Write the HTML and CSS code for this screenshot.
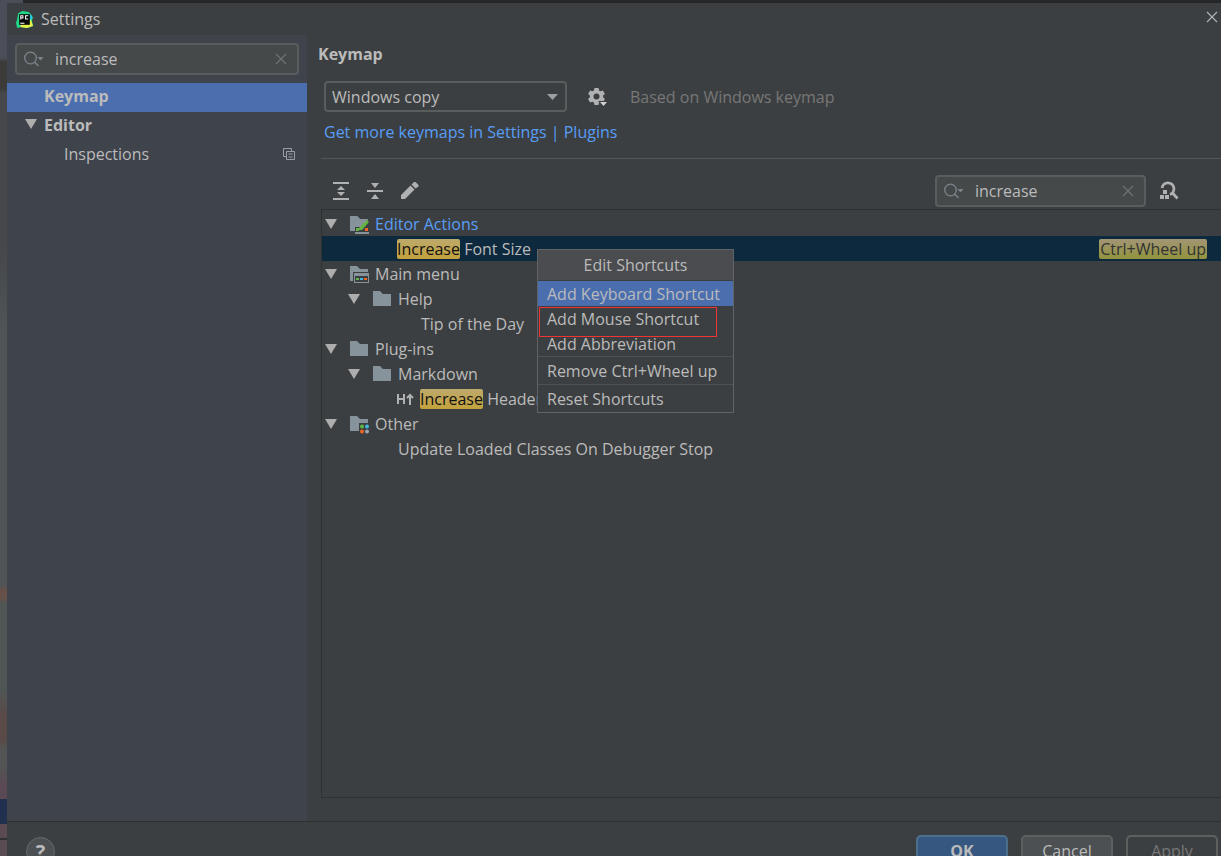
FILE: index.html
```html
<!DOCTYPE html>
<html lang="en">
<head>
<meta charset="utf-8">
<title>Settings</title>
<link rel="stylesheet" href="styles.css">
</head>
<body>
<svg class="symbols" aria-hidden="true">
  <symbol id="search" viewBox="0 0 22 16"><circle cx="6.500" cy="7" r="5.800" fill="none" stroke="currentColor" stroke-width="1.300"/><path d="M10.500 11l4 4" stroke="currentColor" stroke-width="1.500"/><path d="M13.500 6h6l-3 3.500z" fill="currentColor"/></symbol>
  <symbol id="cross" viewBox="0 0 12 12"><path d="M1 1l10 10M11 1L1 11" stroke="currentColor" stroke-width="1.200"/></symbol>
  <symbol id="arrow" viewBox="0 0 12 10"><path d="M0 0h12L6 10z" fill="currentColor"/></symbol>
  <symbol id="folder" viewBox="0 0 20 20"><path d="M0 2h7l3 3h8v12H0z" fill="#87939a"/></symbol>
</svg>
<div class="desktop">
<div class="window">
  <header class="titlebar">
    <svg class="logo" viewBox="0 0 16 16"><path d="M2 2l4-2 6 1 2 2 2 3-1 3 1 5-5 2-6-1-4 1-1-5 1-3z" fill="#21d789"/><path d="M12 2l3 3v3h-2z" fill="#22c7e8"/><path d="M14 8l2 6-6 2-6-1 1-3z" fill="#eaf24a"/><path d="M3 3h10v10H3z" fill="#050505"/><path d="M4.500 8V4.500h2v2h-2M11.500 4.500H9v3h2.500" fill="none" stroke="#fff"/><path d="M4 11.500h4" stroke="#fff"/></svg>
    <h1>Settings</h1>
    <button class="plain close" aria-label="Close"><svg width="12" height="12"><use href="#cross"/></svg></button>
  </header>
  <div class="body">
    <aside class="sidebar">
      <label class="search"><svg width="22" height="16"><use href="#search"/></svg><input type="text" value="increase" aria-label="Search settings"><button class="plain" aria-label="Clear search"><svg width="12" height="12"><use href="#cross"/></svg></button></label>
      <nav>
        <a class="nav-item current" href="#keymap">Keymap</a>
        <a class="nav-item parent" href="#editor"><svg class="arrow" width="12" height="10"><use href="#arrow"/></svg>Editor</a>
        <a class="nav-item child" href="#inspections">Inspections<svg class="copy" width="12" height="12" viewBox="0 0 12 12" fill="none" stroke="#98a0a6"><path d="M3 8.500H.5V.5h8V3M3.500 3.500h8v8h-8zM5.500 6h4M5.500 9h4"/></svg></a>
      </nav>
    </aside>
    <main class="content" id="keymap">
      <h2>Keymap</h2>
      <div class="scheme">
        <span class="select"><select aria-label="Keymap scheme"><option>Windows copy</option></select><svg width="11" height="6" viewBox="0 0 11 6"><path d="M0 0h11L5.500 6z" fill="#9da0a2"/></svg></span>
        <button class="plain" aria-label="Scheme actions"><svg width="20" height="20" viewBox="0 0 20 20"><path fill="#afb1b3" fill-rule="evenodd" d="M6.500 1h4l.6 2.400 1.400.8 2.400-.7 2 3.400-1.800 1.700v1.700l1.800 1.700-2 3.400-2.400-.7-1.400.8-.6 2.500h-4l-.6-2.500-1.400-.8-2.400.7-2-3.400 1.800-1.700V8.600L.1 6.900l2-3.400 2.400.7 1.400-.8zM8.500 6.400a3 3 0 1 0 0 6 3 3 0 0 0 0-6z"/><path d="M10 14h10l-5 5z" fill="#3c3f41"/><path d="M12 15h7l-3.500 4z" fill="#d0d2d3"/></svg></button>
        <span class="hint">Based on Windows keymap</span>
      </div>
      <p class="plugins"><a href="#plugins">Get more keymaps in Settings | Plugins</a></p>
      <hr>
      <div class="toolbar">
        <button class="plain" aria-label="Expand all"><svg width="16" height="18" viewBox="0 0 16 18" fill="#afb1b3"><path d="M0 0h16v2H0zM0 16h16v2H0zM8 4l4 4H4zM8 14l4-4H4z"/></svg></button>
        <button class="plain" aria-label="Collapse all"><svg width="16" height="18" viewBox="0 0 16 18" fill="#afb1b3"><path d="M0 8h16v2H0zM4 1h8L8 6zM4 17h8l-4-5z"/></svg></button>
        <button class="plain" aria-label="Edit shortcut"><svg width="18" height="18" viewBox="0 0 18 18" fill="#afb1b3"><path d="M0 17v-4l9.500-9.500 4 4L4 17zM10.500 2.500L13 0h1.500l3 3v1.500L14.500 6.500z"/></svg></button>
        <label class="search"><svg width="22" height="16"><use href="#search"/></svg><input type="text" value="increase" aria-label="Search actions"><button class="plain" aria-label="Clear action search"><svg width="12" height="12"><use href="#cross"/></svg></button></label>
        <button class="plain find" aria-label="Find by shortcut"><svg width="20" height="19" viewBox="0 0 20 19"><path d="M3 7a6 6 0 1 1 8 6.500M13.500 12l5 5.500" fill="none" stroke="#afb1b3" stroke-width="2.800"/><path d="M4 9h4v4H4zM1 14h4v4H1zM6 14h4v4H6z" fill="#afb1b3"/></svg></button>
      </div>
      <div class="tree">
        <ul>
          <li class="row l1 link"><svg class="arrow" width="12" height="10"><use href="#arrow"/></svg><svg class="icon" viewBox="0 0 20 20"><use href="#folder"/><path d="M4 18v-5h4l8-8h4v14H4z" fill="#3c3f41"/><path d="M0 2h7l3 3h8v1l-7 7H5v4H0z" fill="#87939a"/><path d="M9 14l8-8 2 2-7 8H9z" fill="#62b543"/><path d="M5 18h14v2H5z" fill="#87939a"/><path d="M6 14h3v3H6z" fill="#62b543"/><path d="M15 14h3v3h-3z" fill="#f26522"/></svg>Editor Actions</li>
          <li class="row l3 selected"><span><mark>Increase</mark> Font Size</span><kbd>Ctrl+Wheel up</kbd></li>
          <li class="row l1"><svg class="arrow" width="12" height="10"><use href="#arrow"/></svg><svg class="icon" viewBox="0 0 20 20"><use href="#folder"/><path d="M3 8h17v12H3z" fill="#3c3f41"/><path d="M4 9h15v10H4z" fill="#87939a"/><path d="M5 12h13v6H5z" fill="#3c3f41"/><path d="M6 14h3v2H6z" fill="#62b543"/><path d="M10 14h3v2h-3z" fill="#40b6e0"/><path d="M14 14h3v2h-3z" fill="#f26522"/></svg>Main menu</li>
          <li class="row l2"><svg class="arrow" width="12" height="10"><use href="#arrow"/></svg><svg class="icon" viewBox="0 0 20 20"><use href="#folder"/></svg>Help</li>
          <li class="row l4">Tip of the Day</li>
          <li class="row l1"><svg class="arrow" width="12" height="10"><use href="#arrow"/></svg><svg class="icon" viewBox="0 0 20 20"><use href="#folder"/></svg>Plug-ins</li>
          <li class="row l2"><svg class="arrow" width="12" height="10"><use href="#arrow"/></svg><svg class="icon" viewBox="0 0 20 20"><use href="#folder"/></svg>Markdown</li>
          <li class="row l3"><svg class="heading" width="18" height="12" viewBox="0 0 18 12" fill="none" stroke="#afb1b3" stroke-width="2"><path d="M1 1v10M7 1v10M1 6h6M13 2v10M10 5l3-3 3 3"/></svg><span><mark>Increase</mark> Header</span></li>
          <li class="row l1"><svg class="arrow" width="12" height="10"><use href="#arrow"/></svg><svg class="icon" viewBox="0 0 20 20"><use href="#folder"/><path d="M9 9h11v11H9z" fill="#3c3f41"/><circle cx="12" cy="12.500" r="2" fill="#62b543"/><circle cx="17" cy="12.500" r="2" fill="#40b6e0"/><circle cx="12" cy="17.500" r="2" fill="#f26522"/><circle cx="17" cy="17.500" r="2" fill="#9aa7b0"/></svg>Other</li>
          <li class="row l3">Update Loaded Classes On Debugger Stop</li>
        </ul>
        <div class="menu" role="menu" aria-label="Edit Shortcuts">
          <div class="menu-title">Edit Shortcuts</div>
          <button class="active" role="menuitem">Add Keyboard Shortcut</button>
          <button class="marked" role="menuitem">Add Mouse Shortcut</button>
          <button role="menuitem">Add Abbreviation</button>
          <button class="divided" role="menuitem">Remove Ctrl+Wheel up</button>
          <button class="divided" role="menuitem">Reset Shortcuts</button>
        </div>
      </div>
    </main>
  </div>
  <footer class="footer">
    <button class="help" aria-label="Help">?</button>
    <button class="btn primary">OK</button>
    <button class="btn">Cancel</button>
    <button class="btn" disabled>Apply</button>
  </footer>
</div>
</div>
</body>
</html>
```
FILE: styles.css
```css
*, *::after { box-sizing: border-box; }
body { margin: 0; overflow: hidden; font: 16px/24px "Open Sans", "Noto Sans", sans-serif; color: #bbbbbb; background: #3c3f41; }
button, input, select { font: inherit; color: inherit; }
a { color: inherit; text-decoration: none; }
h1, h2, p, ul { margin: 0; padding: 0; list-style: none; font-size: inherit; }
svg { display: block; flex: none; }
.symbols { position: absolute; width: 0; height: 0; }
.plain { display: flex; padding: 0; border: 0; background: none; }

.desktop {
  height: 100vh;
  padding: 3px 0 0 7px;
  background:
    linear-gradient(90deg, transparent 23px, #252627 23px) top / 100% 3px no-repeat,
    linear-gradient(#4b4e58 0 58px, #3d3b39 62px 88px, #46484c 94px 250px, #505456 330px 585px, #65504a 590px 598px, #505655 604px 690px, #594a48 715px 740px, #525554 750px 765px, #5b4855 785px 799px, #22304f 799px 824px, #5b4a51 824px 838px, #303133 838px 840px, #5a4a51 840px);
}
.window { height: 100%; display: flex; flex-direction: column; background: #3c3f41; }
.titlebar { flex: none; height: 32px; display: flex; align-items: center; gap: 8px; padding: 0 3px 0 9px; }
.titlebar h1 { font-weight: 400; }
.logo { width: 17px; height: 17px; }
.close { margin: 0 0 4px auto; color: #afb1b3; }

.body { flex: 1; min-height: 0; display: flex; }
.sidebar { flex: none; width: 300px; padding-top: 8px; background: #3f434c; }
.search { display: flex; align-items: center; height: 32px; padding: 0 10px 0 7px; border: 2px solid #5a5d5e; border-radius: 4px; background: #45494a; color: #7b858b; }
.search input { flex: 1; min-width: 0; padding: 0 0 0 9px; border: 0; outline: 0; background: none; color: #bbbbbb; }
.search .plain { color: #6e7376; }
.sidebar .search { margin: 0 8px 8px; }
.nav-item { display: flex; align-items: center; height: 29px; padding: 0 12px 3px 37px; }
.current, .parent { font-weight: 700; }
.current { background: #4b6eaf; }
.parent { padding-left: 18px; gap: 7px; }
.parent .arrow { margin-bottom: 3px; }
.child { padding-left: 57px; }
.copy { margin-left: auto; }
.arrow { color: #adadad; }

.content { flex: 1; min-width: 0; display: flex; flex-direction: column; padding: 7px 0 23px 14px; }
.content h2 { margin-left: -3px; }
.scheme { display: flex; align-items: center; margin: 15px 0 0 3px; }
.select { position: relative; display: flex; width: 243px; margin-right: 21px; }
.select select { appearance: none; width: 100%; height: 31px; padding: 0 32px 0 6px; border: 2px solid #5a5d5e; border-radius: 4px; background: #3c3f41; }
.select svg { position: absolute; right: 9px; top: 13px; }
.hint { margin-left: 22px; color: #777777; }
.plugins { margin: 8px 0 0 3px; color: #589df6; }
hr { width: 100%; margin: 14px 0 16px; border: 0; border-top: 1px solid #555555; }
.toolbar { display: flex; align-items: center; gap: 18px; height: 31px; margin-bottom: 3px; padding: 0 42px 0 12px; }
.toolbar .search { width: 211px; margin-left: auto; }
.find { margin-left: -5px; }

.tree { flex: 1; position: relative; padding-top: 1px; border: 1px solid #2f3233; border-right: 0; }
.row { display: flex; align-items: center; height: 25px; padding-right: 14px; white-space: pre; }
.l1 { padding-left: 3px; }
.l2 { padding-left: 26px; }
.l3 { padding-left: 76px; }
.l4 { padding-left: 99px; }
.icon { width: 20px; height: 20px; margin: 0 5px 0 13px; }
.heading { margin: 0 6px 0 -1px; }
.link { color: #589df6; }
.selected { background: #0d293e; }
mark { display: inline-block; height: 20px; margin-left: -1px; border-radius: 2px; line-height: 20px; color: #111111; background: linear-gradient(#bda96b, #c3a23c); }
kbd { margin-left: auto; padding: 0 1px; border-radius: 2px; height: 20px; line-height: 20px; font-family: inherit; color: #333333; background: linear-gradient(#a39575, #91943d); }

.menu { position: absolute; left: 215px; top: 39px; width: 197px; border: 1px solid #616466; background: #3c3f41; }
.menu-title { height: 31px; line-height: 30px; text-align: center; border-bottom: 1px solid #3c3f41; background: #4b4c50; }
.menu button { display: block; width: 100%; height: 25px; padding: 0 9px; border: 0; line-height: 24px; text-align: left; background: none; white-space: nowrap; }
.menu .active { background: #4b6eaf; }
.menu .marked { position: relative; }
.marked::after { content: ""; position: absolute; left: 1px; top: 1px; width: 178px; height: 30px; border: 1px solid #f03434; }
.menu .divided { height: 28px; padding-top: 1px; border-top: 1px solid #515151; }

.footer { flex: none; height: 35px; display: flex; align-items: flex-start; gap: 13px; padding: 13px 3px 0 19px; border-top: 1px solid #2f3233; overflow: hidden; }
.help { width: 29px; height: 29px; margin: 2px auto 0 0; padding: 0; border: 1px solid #66696b; border-radius: 50%; background: #4c5052; font-size: 20px; font-weight: 700; line-height: 24px; }
.btn { width: 92px; height: 32px; padding: 0; border: 2px solid #5e6060; border-radius: 5px; background: #4c5052; }
.primary { border-color: #4c708c; background: #365880; font-weight: 700; }
.btn:disabled { color: #777777; background: none; }
```
